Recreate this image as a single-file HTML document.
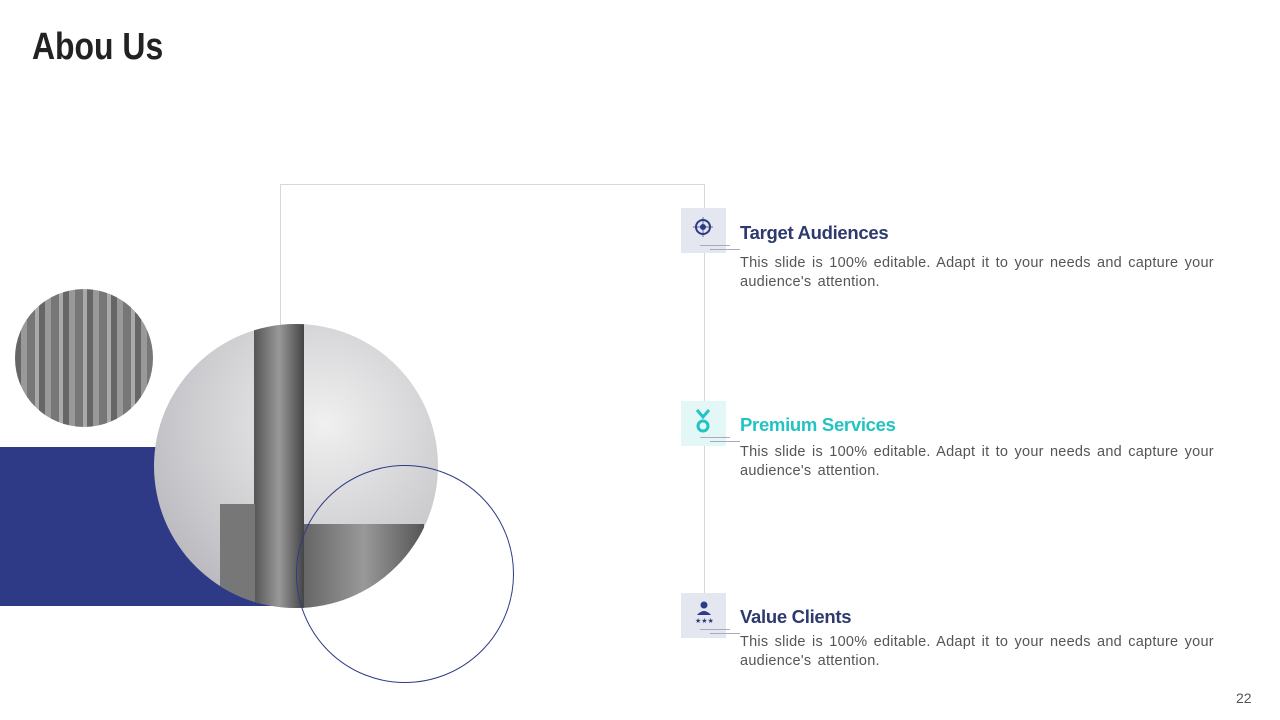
<!DOCTYPE html>
<html><head><style>
body{margin:0;width:1280px;height:720px;background:#fff;position:relative;overflow:hidden;font-family:"Liberation Sans",sans-serif}
.a{position:absolute}
h1{position:absolute;left:32px;top:26px;margin:0;font:bold 38px "Liberation Sans",sans-serif;color:#222;transform:scaleX(0.84);transform-origin:0 0}
.ib{position:absolute;left:681px;width:45px;height:45px}
.t{position:absolute;left:740px;font-weight:bold;font-size:18.5px;letter-spacing:-0.3px}
.p{position:absolute;left:740px;font-size:14.5px;color:#555;line-height:19px;width:500px;letter-spacing:0.25px;word-spacing:2px}
.ul{position:absolute;height:1px;background:#aab}
</style></head><body>
<h1>Abou Us</h1>
<div class="a" style="left:280px;top:184px;width:423px;height:420px;border-left:1px solid #d6d6dc;border-top:1px solid #d6d6dc;border-right:1px solid #d6d6dc"></div>
<div class="a" style="left:0;top:447px;width:300px;height:159px;background:#2e3a86"></div>
<div class="a" style="left:15px;top:289px;width:138px;height:138px;border-radius:50%;background:repeating-linear-gradient(90deg,#666 0 6px,#999 6px 12px,#777 12px 20px,#aaa 20px 24px)"></div>
<div class="a" style="left:154px;top:324px;width:284px;height:284px;border-radius:50%;overflow:hidden;background:radial-gradient(circle at 60% 35%,#f0f0f0,#c8c8cc 60%,#a8a8ae)">
<div class="a" style="left:100px;top:0;width:50px;height:290px;background:linear-gradient(90deg,#555,#999,#444)"></div>
<div class="a" style="left:66px;top:180px;width:35px;height:110px;background:#777"></div>
<div class="a" style="left:150px;top:200px;width:120px;height:90px;background:linear-gradient(90deg,#666,#999,#555)"></div>
</div>
<div class="a" style="left:296px;top:465px;width:216px;height:216px;border-radius:50%;border:1px solid #2e3a86"></div>

<div class="ib" style="top:208px;background:#e4e7f0"><svg width="45" height="45"><circle cx="22" cy="19" r="7" fill="none" stroke="#2e3a86" stroke-width="2"/><circle cx="22" cy="19" r="3" fill="#2e3a86"/><line x1="22" y1="9" x2="22" y2="29" stroke="#2e3a86" stroke-width=".7"/><line x1="12" y1="19" x2="32" y2="19" stroke="#2e3a86" stroke-width=".7"/></svg></div>
<div class="ul" style="left:700px;top:245px;width:30px"></div><div class="ul" style="left:710px;top:249px;width:30px"></div>
<div class="t" style="top:222px;color:#2e3a6e">Target Audiences</div>
<div class="p" style="top:254px">This slide is 100% editable. Adapt it to your needs and capture your audience's attention.</div>

<div class="ib" style="top:401px;background:#e3f7f7"><svg width="45" height="45"><path d="M16 9l6 7 6-7" fill="none" stroke="#22c3c3" stroke-width="3"/><circle cx="22" cy="25" r="5" fill="none" stroke="#22c3c3" stroke-width="3"/></svg></div>
<div class="ul" style="left:700px;top:437px;width:30px"></div><div class="ul" style="left:710px;top:441px;width:30px"></div>
<div class="t" style="top:414px;color:#22c3c3">Premium Services</div>
<div class="p" style="top:443px">This slide is 100% editable. Adapt it to your needs and capture your audience's attention.</div>

<div class="ib" style="top:593px;background:#e4e7f0"><svg width="45" height="45"><circle cx="23" cy="12" r="3.5" fill="#2e3a86"/><path d="M16 22q7-8 14 0z" fill="#2e3a86"/><text x="14" y="30" font-size="7" fill="#2e3a86">★★★</text></svg></div>
<div class="ul" style="left:700px;top:629px;width:30px"></div><div class="ul" style="left:710px;top:633px;width:30px"></div>
<div class="t" style="top:606px;color:#2e3a6e">Value Clients</div>
<div class="p" style="top:633px">This slide is 100% editable. Adapt it to your needs and capture your audience's attention.</div>

<div class="a" style="left:1236px;top:690px;font-size:14px;color:#555">22</div>
</body></html>
